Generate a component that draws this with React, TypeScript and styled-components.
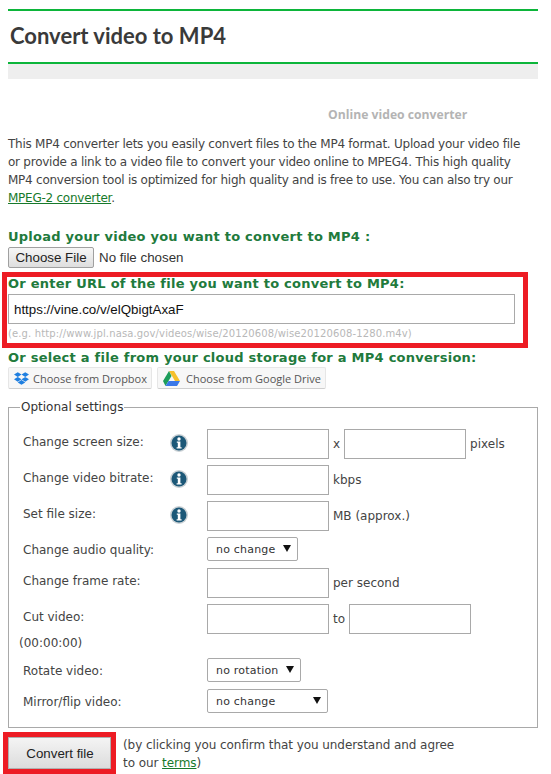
import React from "react";
import styled, { createGlobalStyle } from "styled-components";
import { FaDropbox } from "react-icons/fa";

const GlobalStyle = createGlobalStyle`
  html, body {
    margin: 0;
    padding: 0;
    background: #fff;
  }
  body {
    width: 551px;
    height: 774px;
    overflow: hidden;
    font-family: "DejaVu Sans", Verdana, sans-serif;
    font-size: 12px;
    line-height: 18px;
    color: #444;
  }
`;

const Page = styled.div`
  padding: 9px 13px 0 8px;
`;

const TitleBar = styled.div`
  border-top: 2px solid #0cb53a;
  border-bottom: 2px solid #0cb53a;
  height: 51px;
  display: flex;
  align-items: center;
`;

const Title = styled.h1`
  margin: 0;
  padding: 0 0 1px 2px;
  font-family: Lato, sans-serif;
  font-size: 22px;
  font-weight: 700;
  color: #3a3a3a;
`;

const GreyBand = styled.div`
  height: 15px;
  background: #eeeeee;
`;

const Tagline = styled.div`
  margin: 27px 0 0 320px;
  font-family: "Open Sans", sans-serif;
  font-size: 12.2px;
  font-weight: 700;
  color: #b4b4b4;
`;

const Intro = styled.p`
  margin: 11px 0 0;
  letter-spacing: -0.25px;
  white-space: nowrap;
`;

const TextLink = styled.a`
  color: #177a2c;
  text-decoration: underline;
`;

const SectionHeading = styled.div`
  font-size: 13px;
  font-weight: 700;
  color: #217a3c;
  line-height: 16px;
  letter-spacing: 0.25px;
`;

const UploadBlock = styled.div`
  margin-top: 22px;
`;

const FileInput = styled.input`
  display: block;
  margin-top: 2px;
  font-family: "Liberation Sans", Arial, sans-serif;
  font-size: 13.33px;
  color: #333;

  &::file-selector-button {
    width: 86px;
    height: 21px;
    padding: 0;
    margin-right: 5px;
    border: 1px solid #a0a0a0;
    border-radius: 2px;
    background: linear-gradient(#f6f6f6, #dedede);
    font: inherit;
    color: #222;
  }
`;

const UrlBox = styled.div`
  margin: 4px 0 0 -6px;
  width: 526px;
  height: 76px;
  box-sizing: border-box;
  border: 5px solid #ed1c24;
  padding: 0 0 0 1px;
`;

const UrlHeading = styled(SectionHeading)`
  line-height: 14px;
`;

const UrlInput = styled.input`
  display: block;
  box-sizing: border-box;
  width: 507px;
  height: 30px;
  margin-top: 3px;
  padding: 0 5px;
  border: 1px solid #a9a9a9;
  font-family: "Liberation Sans", Arial, sans-serif;
  font-size: 13.33px;
  color: #111;
  outline: none;
`;

const Hint = styled.div`
  margin-top: 2px;
  font-size: 10px;
  line-height: 16px;
  letter-spacing: 0.13px;
  color: #b8b8b8;
`;

const CloudBlock = styled.div`
  margin-top: 2px;
`;

const CloudButtons = styled.div`
  display: flex;
  gap: 5px;
  margin-top: 1px;
`;

const CloudButton = styled.button<{ $gap: number }>`
  display: flex;
  align-items: center;
  gap: ${(p) => p.$gap}px;
  height: 22px;
  padding: 0 4px 0 5px;
  border: 1px solid #e6e6e6;
  border-bottom-color: #cfcfcf;
  border-radius: 2px;
  background: #f7f7f7;
  font-family: "Open Sans", sans-serif;
  font-size: 11px;
  color: #555;
`;

const Settings = styled.fieldset`
  margin: 11px 0 0;
  padding: 0 10px 14px;
  min-width: 0;
  height: 328px;
  box-sizing: border-box;
  border: 1px solid #a9a9a9;
`;

const Legend = styled.legend`
  padding: 0 1px;
  margin-left: 1px;
  color: #333;
  line-height: 14px;
`;

const Row = styled.div<{ $gap?: number }>`
  display: flex;
  align-items: flex-start;
  margin-top: ${(p) => p.$gap ?? 6}px;
`;

const Label = styled.div`
  width: 140px;
  margin-left: 4px;
  padding-top: 4px;
  flex: none;
  white-space: nowrap;
`;

const IconCell = styled.div`
  width: 44px;
  flex: none;
  padding: 5px 0 0 7px;
  box-sizing: border-box;
`;

const TextField = styled.input`
  box-sizing: border-box;
  width: 122px;
  height: 30px;
  flex: none;
  padding: 0 4px;
  border: 1px solid #a9a9a9;
  outline: none;
`;

const Unit = styled.span`
  margin: 6px 4px 0;
  line-height: 18px;
`;

const SelectWrap = styled.div`
  position: relative;
  flex: none;

  &::after {
    content: "";
    position: absolute;
    right: 7px;
    top: 8px;
    border-left: 4px solid transparent;
    border-right: 4px solid transparent;
    border-top: 7px solid #111;
    pointer-events: none;
  }
`;

const Select = styled.select<{ $width: number }>`
  display: block;
  appearance: none;
  box-sizing: border-box;
  width: ${(p) => p.$width}px;
  height: 24px;
  padding: 0 8px;
  border: 1px solid #a9a9a9;
  border-radius: 2px;
  background: #fff;
  font-family: "DejaVu Sans", Verdana, sans-serif;
  font-size: 11px;
  letter-spacing: 0.2px;
  color: #333;
`;

const SubmitRow = styled.div`
  display: flex;
  margin: 4px 0 0 -5px;
  gap: 7px;
`;

const SubmitFrame = styled.div`
  flex: none;
  width: 113px;
  height: 42px;
  box-sizing: border-box;
  border: 5px solid #ed1c24;
`;

const SubmitButton = styled.button`
  display: block;
  width: 103px;
  height: 32px;
  padding: 0 0 0 1px;
  border: 1px solid #b0b0b0;
  background: linear-gradient(#f4f4f4, #dcdcdc);
  font-family: "Liberation Sans", Arial, sans-serif;
  font-size: 13.33px;
  color: #222;
`;

const Terms = styled.div`
  padding-top: 4px;
  letter-spacing: -0.07px;
`;

const InfoIcon = () => (
  <svg width="18" height="18" viewBox="0 0 18 18">
    <circle cx="9" cy="9" r="9" fill="#c9d0d4" />
    <circle cx="9" cy="9" r="7.5" fill="#1c5878" />
    <circle cx="9" cy="5" r="1.7" fill="#fff" />
    <path d="M6.8 7.4h3.6v5.9h1.2v1.3H6.6v-1.3h1.2V8.7h-1z" fill="#fff" />
  </svg>
);

const DriveIcon = () => (
  <svg width="17" height="15" viewBox="0 0 17 15">
    <path d="M6 0h5l6 10h-5z" fill="#f6c02c" />
    <path d="M6 0L0 10l2.5 5L8.5 5z" fill="#1d9d5a" />
    <path d="M2.5 15h11.5l3-5H5.5z" fill="#3a78e8" />
  </svg>
);

const App: React.FC = () => {
  return (
    <Page>
      <GlobalStyle />
      <TitleBar>
        <Title>Convert video to MP4</Title>
      </TitleBar>
      <GreyBand />
      <Tagline>Online video converter</Tagline>
      <Intro>
        This MP4 converter lets you easily convert files to the MP4 format. Upload your video file
        <br />
        or provide a link to a video file to convert your video online to MPEG4. This high quality
        <br />
        MP4 conversion tool is optimized for high quality and is free to use. You can also try our
        <br />
        <TextLink href="#">MPEG-2 converter</TextLink>.
      </Intro>

      <UploadBlock>
        <SectionHeading>Upload your video you want to convert to MP4 :</SectionHeading>
        <FileInput type="file" />
      </UploadBlock>

      <UrlBox>
        <UrlHeading>Or enter URL of the file you want to convert to MP4:</UrlHeading>
        <UrlInput type="text" defaultValue="https://vine.co/v/elQbigtAxaF" />
        <Hint>(e.g. http://www.jpl.nasa.gov/videos/wise/20120608/wise20120608-1280.m4v)</Hint>
      </UrlBox>

      <CloudBlock>
        <SectionHeading>Or select a file from your cloud storage for a MP4 conversion:</SectionHeading>
        <CloudButtons>
          <CloudButton $gap={4}>
            <FaDropbox size={15} color="#1f7fe0" />
            Choose from Dropbox
          </CloudButton>
          <CloudButton $gap={6}>
            <DriveIcon />
            Choose from Google Drive
          </CloudButton>
        </CloudButtons>
      </CloudBlock>

      <Settings>
        <Legend>Optional settings</Legend>
        <Row $gap={15}>
          <Label>Change screen size:</Label>
          <IconCell><InfoIcon /></IconCell>
          <TextField />
          <Unit>x</Unit>
          <TextField />
          <Unit>pixels</Unit>
        </Row>
        <Row>
          <Label>Change video bitrate:</Label>
          <IconCell><InfoIcon /></IconCell>
          <TextField />
          <Unit>kbps</Unit>
        </Row>
        <Row>
          <Label>Set file size:</Label>
          <IconCell><InfoIcon /></IconCell>
          <TextField />
          <Unit>MB (approx.)</Unit>
        </Row>
        <Row>
          <Label>Change audio quality:</Label>
          <IconCell />
          <SelectWrap>
            <Select $width={91} defaultValue="no change">
              <option>no change</option>
            </Select>
          </SelectWrap>
        </Row>
        <Row $gap={7}>
          <Label>Change frame rate:</Label>
          <IconCell />
          <TextField />
          <Unit>per second</Unit>
        </Row>
        <Row>
          <Label>Cut video:</Label>
          <IconCell />
          <TextField />
          <Unit>to</Unit>
          <TextField />
        </Row>
        <div>(00:00:00)</div>
        <Row>
          <Label>Rotate video:</Label>
          <IconCell />
          <SelectWrap>
            <Select $width={94} defaultValue="no rotation">
              <option>no rotation</option>
            </Select>
          </SelectWrap>
        </Row>
        <Row $gap={7}>
          <Label>Mirror/flip video:</Label>
          <IconCell />
          <SelectWrap>
            <Select $width={121} defaultValue="no change">
              <option>no change</option>
            </Select>
          </SelectWrap>
        </Row>
      </Settings>

      <SubmitRow>
        <SubmitFrame>
          <SubmitButton>Convert file</SubmitButton>
        </SubmitFrame>
        <Terms>
          (by clicking you confirm that you understand and agree
          <br />
          to our <TextLink href="#">terms</TextLink>)
        </Terms>
      </SubmitRow>
    </Page>
  );
};

export default App;
